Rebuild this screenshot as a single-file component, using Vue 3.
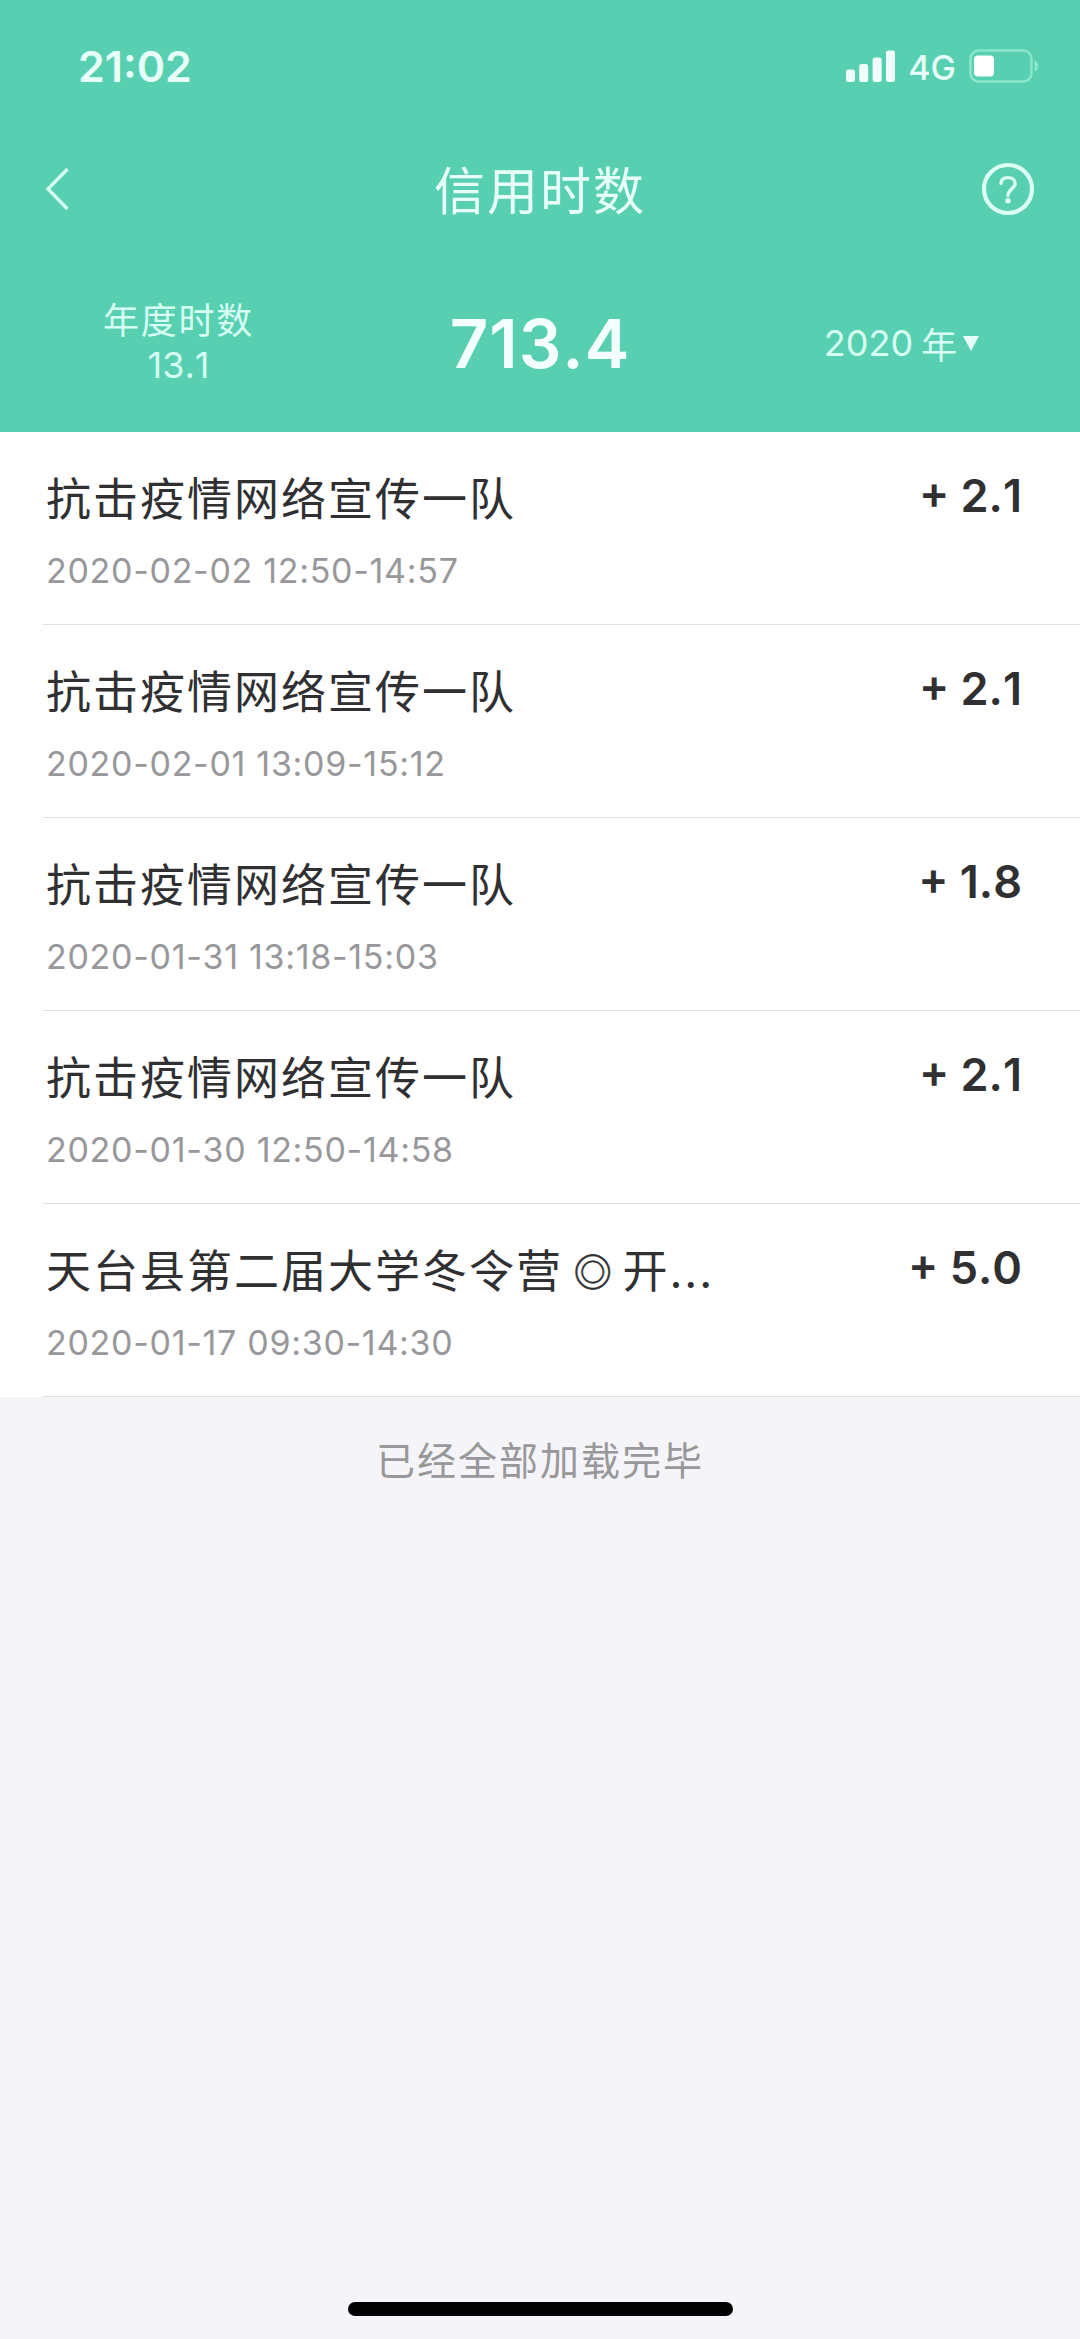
<script setup>
import { ref } from "vue";

const total = ref("713.4");
const anual = ref("13.1");
const year = ref(2020);

const records = ref([
  { title: "抗击疫情网络宣传一队", time: "2020-02-02 12:50-14:57", hours: "2.1" },
  { title: "抗击疫情网络宣传一队", time: "2020-02-01 13:09-15:12", hours: "2.1" },
  { title: "抗击疫情网络宣传一队", time: "2020-01-31 13:18-15:03", hours: "1.8" },
  { title: "抗击疫情网络宣传一队", time: "2020-01-30 12:50-14:58", hours: "2.1" },
  { title: "天台县第二届大学冬令营 ◎ 开...", time: "2020-01-17 09:30-14:30", hours: "5.0" },
]);

// the ◎ sign is drawn a bit smaller than the text around it
function splitTitle(title) {
  return title.split(/( ◎ )/);
}
</script>

<template>
  <div class="page">
    <header class="header">
      <div class="status">
        <span class="clock">21:02</span>
        <div class="status-icons">
          <svg class="signal" width="50" height="32" viewBox="0 0 50 32">
            <rect x="0" y="19.5" width="9" height="12.5" rx="2.5" />
            <rect x="13.2" y="14" width="9" height="18" rx="2.5" />
            <rect x="26.6" y="7.5" width="9" height="24.5" rx="2.5" />
            <rect x="40" y="0.5" width="9" height="31.5" rx="2.5" />
          </svg>
          <span class="network">4G</span>
          <svg class="battery" width="71" height="34" viewBox="0 0 71 34">
            <rect x="1.5" y="1.5" width="61" height="31" rx="8" fill="none" stroke="#8be8cb" stroke-width="2.4" />
            <rect x="5" y="6.5" width="20" height="21" rx="4" fill="#fff" />
            <path d="M65.5 11.5C70.8 13 70.8 21 65.5 22.5Z" fill="#8be8cb" />
          </svg>
        </div>
      </div>

      <nav class="nav">
        <svg class="back" width="26" height="44" viewBox="0 0 26 44">
          <path d="M22.5 2L3 22L22.5 42" />
        </svg>
        <h1>信用时数</h1>
        <svg class="help" width="54" height="54" viewBox="0 0 54 54">
          <circle cx="27" cy="27" r="24" stroke-width="4.2" />
          <path d="M20 21.5C20 17.6 22.8 15.6 27 15.6C31.2 15.6 34.2 18 34.2 21.5C34.2 26.4 27 27.2 27 33.4" stroke-width="3.4" />
          <circle class="dot" cx="27" cy="38.8" r="2.7" />
        </svg>
      </nav>

      <div class="summary">
        <div class="anual">
          <span class="label">年度时数</span>
          <span class="value">{{ anual }}</span>
        </div>
        <div class="total">{{ total }}</div>
        <div class="year">
          <span>{{ year }}</span>
          <span class="unit">年</span>
          <i class="arrow"></i>
        </div>
      </div>
    </header>

    <ul class="list">
      <li v-for="item in records" :key="item.time">
        <div class="info">
          <p class="title">
            <span
              v-for="(part, i) in splitTitle(item.title)"
              :key="i"
              :class="{ symbol: part === ' ◎ ' }"
            >{{ part }}</span>
          </p>
          <p class="time">{{ item.time }}</p>
        </div>
        <span class="hours">+ {{ item.hours }}</span>
      </li>
    </ul>

    <p class="loaded">已经全部加载完毕</p>
    <div class="home-bar"></div>
  </div>
</template>

<style>
body {
  background-color: #f5f4f8;
}
</style>

<style scoped>
.page {
  box-sizing: border-box;
  width: 1080px;
  height: 2339px;
  display: flex;
  flex-direction: column;
  overflow: hidden;
  background-color: #f5f4f8;
  font-family: Inter, "Noto Sans CJK SC", sans-serif;
  font-kerning: none;
}

h1,
p,
ul {
  margin: 0;
  padding: 0;
  font-weight: normal;
}

.header {
  height: 432px;
  flex-shrink: 0;
  background-color: #58cfb0;
  color: #e6fff8;
}

.status {
  box-sizing: border-box;
  height: 132px;
  padding: 0 40px 0 78px;
  display: flex;
  justify-content: space-between;
  align-items: center;
}

.clock {
  font-size: 43px;
  font-weight: 600;
}

.status-icons {
  display: flex;
  align-items: center;
}

.signal {
  fill: #f0fffb;
}

.network {
  margin: 3px 13px 0 12px;
  font-size: 34px;
  font-weight: 500;
}

.nav {
  box-sizing: border-box;
  height: 114px;
  padding: 0 45px;
  display: flex;
  justify-content: space-between;
  align-items: center;

  h1 {
    font-size: 51px;
    letter-spacing: 2px;
    padding-left: 28px;
    padding-bottom: 2px;
  }
}

.back {
  fill: none;
  stroke: #d5fff2;
  stroke-width: 3.4;
}

.help {
  fill: none;
  stroke: #dcfff5;
  stroke-linecap: round;

  .dot {
    fill: #dcfff5;
    stroke: none;
  }
}

.summary {
  box-sizing: border-box;
  height: 186px;
  padding-top: 8px;
  display: grid;
  grid-template-columns: 357px 366px 357px;
  align-items: center;
  text-align: center;
}

.anual {
  display: flex;
  flex-direction: column;
  font-size: 36px;
  line-height: 44px;
  color: #d5fff2;

  .label {
    letter-spacing: 1.8px;
  }
}

.total {
  font-size: 67px;
  font-weight: 600;
  letter-spacing: 1px;
  color: #f2fffc;
}

.year {
  display: flex;
  justify-content: center;
  align-items: center;
  font-size: 36px;
  color: #d5fff2;

  .unit {
    margin-left: 8px;
  }

  .arrow {
    margin-left: 6px;
    border-left: 8px solid transparent;
    border-right: 8px solid transparent;
    border-top: 15px solid #e6fff8;
  }
}

.list {
  list-style: none;
  background-color: #fff;

  li {
    box-sizing: border-box;
    height: 193px;
    margin-left: 43px;
    padding: 34px 58px 0 3px;
    display: flex;
    justify-content: space-between;
    align-items: flex-start;
    border-bottom: 1px solid #e0dfe1;
  }
}

.title {
  padding-top: 2px;
  font-size: 45px;
  line-height: 64px;
  letter-spacing: 2px;
  color: #303033;

  .symbol {
    font-size: 38px;
    line-height: 1;
    letter-spacing: 0;
    white-space: pre;
    vertical-align: 2px;
    -webkit-text-stroke: 0.6px #303033;
  }
}

.time {
  margin-top: 18px;
  font-size: 34px;
  line-height: 42px;
  letter-spacing: 0.7px;
  color: #98989b;
}

.hours {
  font-size: 45px;
  font-weight: 600;
  line-height: 60px;
  color: #303033;
}

.loaded {
  margin-top: 32px;
  font-size: 39px;
  line-height: 64px;
  letter-spacing: 2px;
  text-align: center;
  color: #98989b;
}

.home-bar {
  width: 385px;
  height: 14px;
  margin: auto auto 23px;
  border-radius: 7px;
  background-color: #000;
}
</style>
